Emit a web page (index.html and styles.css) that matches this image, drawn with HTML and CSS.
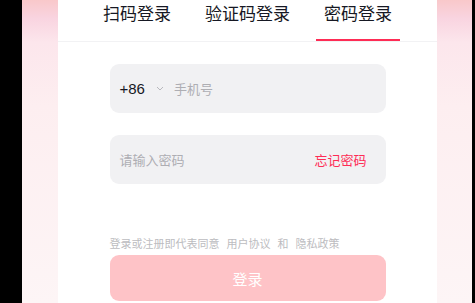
FILE: index.html
```html
<!DOCTYPE html>
<html lang="zh-CN">
<head>
  <meta charset="UTF-8">
  <meta name="viewport" content="width=device-width,initial-scale=1.0">
  <title>登录</title>
  <link rel="stylesheet" href="styles.css">
</head>
<body>
  <div class="shell">
    <div class="panel">
      <div class="tabs">
        <span class="tab">扫码登录</span>
        <span class="tab">验证码登录</span>
        <span class="tab active">密码登录</span>
      </div>
      <div class="form">
        <div class="field">
          <span class="code">+86</span>
          <svg class="arrow" width="8" height="5" viewBox="0 0 8 5"><polyline points="1,1 4,4 7,1" fill="none" stroke="#b8b8bd" stroke-width="1"/></svg>
          <span class="placeholder">手机号</span>
        </div>
        <div class="field">
          <span class="placeholder">请输入密码</span>
          <span class="forget">忘记密码</span>
        </div>
        <p class="agree">登录或注册即代表同意<span>用户协议</span><span>和</span><span>隐私政策</span></p>
        <button class="submit">登录</button>
      </div>
    </div>
  </div>
</body>
</html>
```

FILE: styles.css
```css
/* 全局 */
body {
  margin: 0;
  background: #000;
  font-family: "Liberation Sans", "Noto Sans CJK SC", sans-serif;
  color: #161823;
}

/* 背景 */
.shell {
  margin: 0 3px 0 22px;
  height: 303px;
  overflow: hidden;
  background: linear-gradient(
    180deg,
    #f9c8ca 0%,
    #f9d4e0 6%,
    #fce6ec 14%,
    #fdeef0 35%,
    #fdf5f6 100%
  );
}
.panel {
  width: 379px;
  height: 100%;
  margin-left: 36px;
  background: #fff;
}

/* 切换 */
.tabs {
  display: flex;
  justify-content: center;
  gap: 18px;
  border-bottom: 1px solid #f2f2f4;
}
.tab {
  padding: 0 8px;
  height: 39px;
  line-height: 30px;
  font-size: 17px;
  border-bottom: 2px solid transparent;
}
.tab.active {
  border-bottom-color: #fe2c55;
}

/* 表单 */
.form {
  width: 276px;
  margin: 22px auto 0;
}
.field {
  height: 49px;
  margin-bottom: 22px;
  padding: 0 10px;
  border-radius: 9px;
  background: #f1f1f3;
  display: flex;
  align-items: center;
  font-size: 13px;
}
.code {
  font-size: 15px;
  color: #161823;
}
.arrow {
  margin: 0 10px 0 11px;
}
.placeholder {
  color: #aeaeb3;
}
.forget {
  margin-left: auto;
  margin-right: 9px;
  color: #fe2c55;
}
.agree {
  margin: 52px 0 3px;
  font-size: 11px;
  line-height: 16px;
  color: #bcbcc0;
}
.agree span {
  margin-left: 7px;
}
.submit {
  width: 100%;
  height: 46px;
  border: none;
  border-radius: 9px;
  background: #fec3c7;
  color: #fff;
  font-family: inherit;
  font-size: 15px;
}
```
